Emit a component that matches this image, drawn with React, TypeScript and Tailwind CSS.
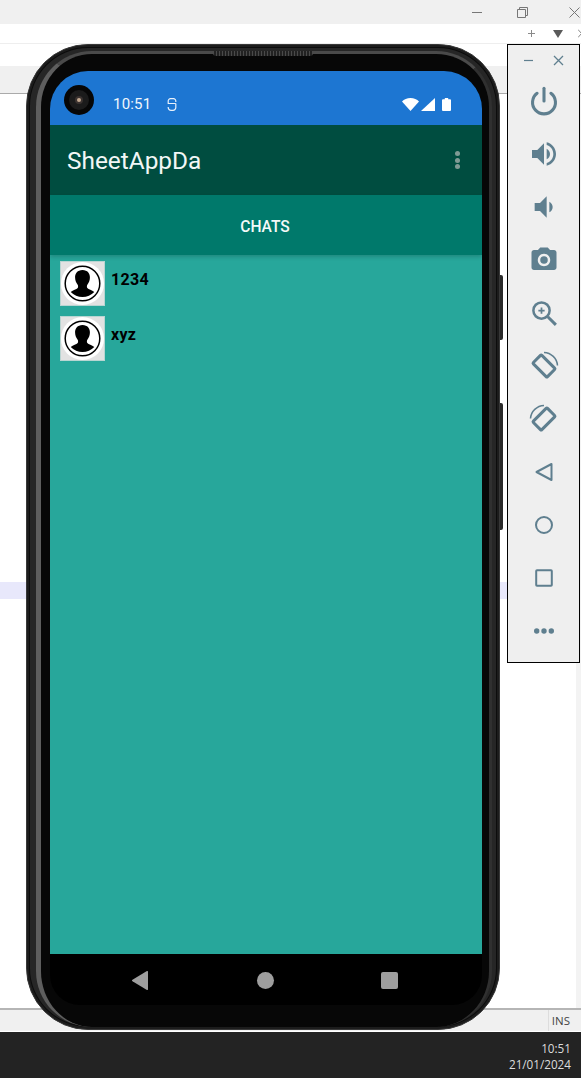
const slate = "#5f7f8f";

function Icon({ children, size = 32, box = 24 }: { children: React.ReactNode; size?: number; box?: number }) {
  return (
    <svg width={size} height={size} viewBox={`0 0 ${box} ${box}`} fill={slate}>
      {children}
    </svg>
  );
}

const Line = { fill: "none", stroke: slate, strokeWidth: 2 };

function Slot({ children }: { children: React.ReactNode }) {
  return <div className="flex h-[53px] w-full items-center justify-center">{children}</div>;
}

function PanelIcons() {
  return (
    <div className="flex flex-col items-center">
      <Slot>
        <Icon size={32}>
          <path d="M12 2.500v9.500" {...Line} strokeLinecap="round" strokeWidth={2.3} />
          <path d="M6.800 6.200a8.600 8.600 0 1 0 10.400 0" {...Line} strokeLinecap="round" strokeWidth={2.3} />
        </Icon>
      </Slot>
      <Slot>
        <Icon>
          <path d="M3 9v6h4l5 5V4L7 9H3zm13.5 3c0-1.77-1.02-3.29-2.5-4.03v8.05c1.48-.73 2.5-2.25 2.5-4.02zM14 3.23v2.06c2.89.86 5 3.54 5 6.71s-2.11 5.85-5 6.71v2.06c4.01-.91 7-4.49 7-8.77s-2.99-7.86-7-8.77z" />
        </Icon>
      </Slot>
      <Slot>
        <Icon>
          <path d="M18.5 12c0-1.77-1.02-3.29-2.5-4.03v8.05c1.48-.73 2.5-2.25 2.5-4.02zM5 9v6h4l5 5V4L9 9H5z" />
        </Icon>
      </Slot>
      <Slot>
        <Icon size={30}>
          <path d="M9 2L7.17 4H4c-1.1 0-2 .9-2 2v12c0 1.1.9 2 2 2h16c1.1 0 2-.9 2-2V6c0-1.1-.9-2-2-2h-3.17L15 2H9zm3 15c-2.76 0-5-2.24-5-5s2.24-5 5-5 5 2.24 5 5-2.24 5-5 5z" />
          <circle cx="12" cy="12" r="3" />
        </Icon>
      </Slot>
      <Slot>
        <Icon size={30}>
          <circle cx="10" cy="10" r="6.500" {...Line} />
          <path d="M15 15l6.500 6.500" {...Line} strokeWidth={2.4} />
          <path d="M10 7.500v5M7.500 10h5" {...Line} strokeWidth={1.4} />
        </Icon>
      </Slot>
      <Slot>
        <Icon box={32}>
          <rect x="6" y="10" width="20" height="12" rx="1" transform="rotate(45 16 16)" {...Line} strokeWidth={3} />
          <path d="M16 2.500A14 14 0 0 1 29.500 15.500" {...Line} strokeWidth={1.5} />
        </Icon>
      </Slot>
      <Slot>
        <Icon box={32}>
          <rect x="6" y="10" width="20" height="12" rx="1" transform="rotate(-45 16 16)" {...Line} strokeWidth={3} />
          <path d="M2.500 15.500A14 14 0 0 1 16 2.500" {...Line} strokeWidth={1.5} />
        </Icon>
      </Slot>
      <Slot>
        <Icon size={24}>
          <path d="M19.500 4v16L4.500 12z" {...Line} strokeLinejoin="round" />
        </Icon>
      </Slot>
      <Slot>
        <Icon size={24}>
          <circle cx="12" cy="12" r="8" {...Line} />
        </Icon>
      </Slot>
      <Slot>
        <Icon size={24}>
          <rect x="4.200" y="4.200" width="15.600" height="15.600" rx="0.800" {...Line} />
        </Icon>
      </Slot>
      <Slot>
        <Icon size={24}>
          <circle cx="4.700" cy="12" r="2.700" />
          <circle cx="12" cy="12" r="2.700" />
          <circle cx="19.300" cy="12" r="2.700" />
        </Icon>
      </Slot>
    </div>
  );
}

function Avatar() {
  return (
    <div className="flex h-[45px] w-[45px] shrink-0 items-center justify-center border border-[#b9d5d2] bg-[#e2e2e2]">
      <svg width="43" height="43" viewBox="0 0 43 43">
        <circle cx="21.500" cy="21.500" r="21.500" fill="#ffffff" />
        <circle cx="21.500" cy="21.500" r="17.300" fill="none" stroke="#000000" strokeWidth="1.500" />
        <path
          d="M21.500 8c-5 0-7.600 3.600-7.400 7.800.1 2.700 1 5 2.400 6.700.7 1 .8 2.800.2 3.600-1.200 1.400-4.600 1.800-7 4a16.600 16.600 0 0 0 23.600 0c-2.400-2.200-5.800-2.600-7-4-.6-.8-.5-2.600.2-3.600 1.400-1.700 2.300-4 2.400-6.700C29.100 11.600 26.500 8 21.500 8z"
          fill="#000000"
        />
      </svg>
    </div>
  );
}

function ChatRow({ name }: { name: string }) {
  return (
    <div className="flex h-[45px] items-start gap-[6px]">
      <Avatar />
      <span className="pt-[9px] text-[16px] leading-[19px] font-bold tracking-[0.3px] text-black">{name}</span>
    </div>
  );
}

function StatusBar() {
  return (
    <div className="relative flex h-[54px] shrink-0 items-center bg-[#1d76d2] pt-[12px] pr-[31px] pl-[63px] text-white">
      <div className="absolute top-[14px] left-[14px] flex h-[30px] w-[30px] items-center justify-center rounded-full bg-[#060606]">
        <div className="flex h-[20px] w-[20px] items-center justify-center rounded-full bg-[#1b1b1b]">
          <div className="flex h-[8px] w-[8px] items-center justify-center rounded-full bg-[#3a3230]">
            <div className="h-[4px] w-[4px] rounded-full bg-[#c2a88f]" />
          </div>
        </div>
      </div>
      <span className="text-[15px] leading-[18px] font-normal tracking-[0.2px] text-[#f1f6fc]">10:51</span>
      <svg className="ml-[16px]" width="10" height="13" viewBox="0 0 10 13" fill="none" stroke="#e9f1fb" strokeWidth="1.200">
        <path d="M8.800 4V3A2.300 2.300 0 0 0 6.500.7h-3A2.300 2.300 0 0 0 1.200 3v2.500" />
        <path d="M.8 5.500h8" />
        <path d="M8.800 5.500v4a2.800 2.800 0 0 1-2.800 2.800H4A2.800 2.800 0 0 1 1.200 9.500V9" />
      </svg>
      <div className="ml-auto flex items-center gap-[2px]">
        <svg width="17" height="13" viewBox="0 0 17 13" fill="#ffffff">
          <path d="M8.500 13L0 3.600C2 1.400 5 0 8.500 0S15 1.400 17 3.600z" />
        </svg>
        <svg width="14" height="13" viewBox="0 0 14 13" fill="#ffffff">
          <path d="M14 0v13H0z" />
        </svg>
        <svg className="ml-[5px]" width="9" height="13" viewBox="0 0 9 13" fill="#ffffff">
          <path d="M2.800 0h3.400v1.200H8a1 1 0 0 1 1 1V12a1 1 0 0 1-1 1H1a1 1 0 0 1-1-1V2.200a1 1 0 0 1 1-1h1.800z" />
        </svg>
      </div>
    </div>
  );
}

function Phone() {
  return (
    <div className="absolute top-[44px] left-[26px] h-[986px] w-[474px] rounded-[62px] border border-[#383838] bg-[#262626] pt-[6px] pr-[7px] pb-[2px] pl-[9px] shadow-[inset_0_0_0_2px_#1c1c1c,inset_0_0_0_3px_#0c0c0c]">
      <div className="absolute top-[6px] left-[186px] h-[5px] w-[100px] rounded-b-[3px] bg-[repeating-linear-gradient(90deg,#4a4a4a_0,#4a4a4a_1px,#222222_1px,#222222_3px)]" />
      <div className="h-full rounded-[56px] border-t-[3px] border-r-[3px] border-l-[5px] border-t-[#4a4a4a] border-r-[#303030] border-l-[#5e5e5e] bg-[#070707] pt-[17px] pr-[7px] pl-[9px]">
        <div className="flex h-[934px] flex-col overflow-hidden rounded-t-[38px] rounded-b-[30px]">
          <StatusBar />
          <div className="flex h-[70px] shrink-0 items-center justify-between bg-[#004d40] pt-[2px] pr-[22px] pl-[17px]">
            <span className="text-[24.4px] leading-[28px] text-[#f2f7f6]">SheetAppDa</span>
            <div className="flex -translate-y-px flex-col gap-[1.5px]">
              <div className="h-[5px] w-[5px] rounded-full bg-[#7f9a94]" />
              <div className="h-[5px] w-[5px] rounded-full bg-[#7f9a94]" />
              <div className="h-[5px] w-[5px] rounded-full bg-[#7f9a94]" />
            </div>
          </div>
          <div className="relative z-10 flex h-[60px] shrink-0 items-center justify-center bg-[#00796b] pt-[3px] pr-[2px] shadow-[0_2px_4px_rgba(0,0,0,0.18)]">
            <span className="text-[15.6px] leading-[18px] font-medium text-[#f4f9f8]">CHATS</span>
          </div>
          <div className="flex h-[699px] shrink-0 flex-col gap-[10px] bg-[#27a79b] pt-[6px] pl-[10px]">
            <ChatRow name="1234" />
            <ChatRow name="xyz" />
          </div>
          <div className="flex flex-1 items-center justify-between bg-black pt-[2px] pr-[84px] pl-[82px]">
            <svg width="16" height="19" viewBox="0 0 16 19" fill="#9e9e9e">
              <path d="M16 1v17a1 1 0 0 1-1.500.8L.5 10.300a1 1 0 0 1 0-1.600L14.500.2A1 1 0 0 1 16 1z" />
            </svg>
            <div className="ml-[1px] h-[17px] w-[17px] rounded-full bg-[#9e9e9e]" />
            <div className="h-[17px] w-[17px] rounded-[2px] bg-[#9e9e9e]" />
          </div>
        </div>
      </div>
    </div>
  );
}

function SideButtons() {
  return (
    <>
      <div className="absolute top-[275px] left-[499px] h-[65px] w-[4px] rounded-r-[2px] bg-[#2a2a2a]" />
      <div className="absolute top-[403px] left-[499px] h-[127px] w-[4px] rounded-r-[2px] bg-[#2a2a2a]" />
    </>
  );
}

function EmulatorPanel() {
  return (
    <div className="absolute top-[44px] left-[507px] h-[619px] w-[73px] border border-black bg-[#efefef]">
      <div className="flex h-[29px] items-center justify-center gap-[19px] pt-[2px]">
        <svg width="11" height="11" viewBox="0 0 11 11" stroke={slate} strokeWidth="1.200">
          <path d="M1 5.500h9" />
        </svg>
        <svg width="11" height="11" viewBox="0 0 11 11" stroke={slate} strokeWidth="1.300">
          <path d="M1 1l9 9M10 1l-9 9" />
        </svg>
      </div>
      <PanelIcons />
    </div>
  );
}

export default function App() {
  return (
    <div className="relative flex h-[1078px] w-[581px] flex-col overflow-hidden bg-white font-['Roboto',sans-serif]">
      <div className="flex h-[24px] shrink-0 items-center justify-end bg-[#f0f0f0] pr-[1px]">
        <div className="h-px w-[10px] bg-[#777777]" />
        <svg className="ml-[35px]" width="11" height="11" viewBox="0 0 11 11" fill="none" stroke="#777777">
          <path d="M.5 2.500h8v8h-8zM2.500 2.500v-2h8v8h-2" />
        </svg>
        <svg className="ml-[41px]" width="11" height="11" viewBox="0 0 11 11" stroke="#777777">
          <path d="M.5.5l10 10M10.500.5l-10 10" />
        </svg>
      </div>
      <div className="flex h-[20px] shrink-0 items-center justify-end border-b border-[#eeeeee] bg-white">
        <svg width="9" height="9" viewBox="0 0 9 9" stroke="#8a8a8a">
          <path d="M4.500 1v7M1 4.500h7" />
        </svg>
        <svg className="ml-[17px]" width="10" height="8" viewBox="0 0 10 8" fill="#5a5a5a">
          <path d="M0 0h10L5 8z" />
        </svg>
        <svg className="ml-[15px]" width="3" height="9" viewBox="0 0 3 9" fill="none" stroke="#8a8a8a">
          <path d="M0 .5l3.500 4M3.500 4.500L0 8.500" />
        </svg>
      </div>
      <div className="h-[22px] shrink-0 bg-white" />
      <div className="h-[28px] shrink-0 border-b border-[#aaaaaa] bg-[#f0f0f0]" />
      <div className="flex min-h-0 flex-1 justify-end bg-white">
        <div className="w-[5px] bg-[#f3f3f3]" />
      </div>
      <div className="flex h-[24px] shrink-0 justify-end border-t-2 border-b border-t-[#b5b5b5] border-b-white bg-[#f0f0f0] pr-[11px]">
        <span className="flex items-center border-l border-[#dddddd] pl-[3px] font-['Open_Sans',sans-serif] text-[11.5px] text-[#444444]">
          INS
        </span>
      </div>
      <div className="flex h-[46px] shrink-0 flex-col items-end justify-center bg-[#232323] pt-[2px] pr-[10px] font-['Open_Sans',sans-serif] text-[11.7px] leading-[16px] text-[#dcdcdc]">
        <span>10:51</span>
        <span>21/01/2024</span>
      </div>
      <div className="absolute top-[582px] left-0 h-[17px] w-[30px] bg-[#e8e8fb]" />
      <div className="absolute top-[582px] left-[495px] h-[17px] w-[14px] bg-[#e8e8fb]" />
      <SideButtons />
      <Phone />
      <EmulatorPanel />
    </div>
  );
}
